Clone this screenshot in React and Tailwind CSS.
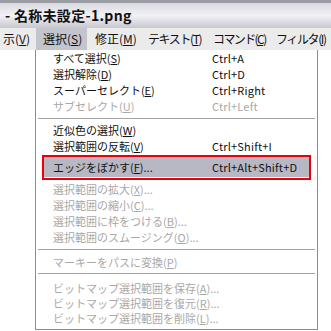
import React from 'react';

const jp = { fontFamily: '"MS UI Gothic", "Noto Sans CJK JP", "Liberation Sans", sans-serif' };

function Mn({ label, k, after = '' }) {
  return (
    <span>
      {label}(<u>{k}</u>){after}
    </span>
  );
}

function Row({ label, k, after, shortcut, disabled, h = 'h-4' }) {
  return (
    <div className={`${h} flex items-center pl-[17px] ${disabled ? 'text-[#a8a8a8]' : 'text-[#111]'}`}>
      <div className="w-[159px] whitespace-nowrap">
        <Mn label={label} k={k} after={after} />
      </div>
      {shortcut && <div className="whitespace-nowrap tracking-[0.2px]">{shortcut}</div>}
    </div>
  );
}

function Sep({ h, top }) {
  return (
    <div className={`${h} flex flex-col`}>
      <div className={top} />
      <div className="mx-[2px] h-px bg-[#a4a4a4]" />
      <div className="mx-[2px] h-px bg-white" />
    </div>
  );
}

export default function App() {
  const menus = [
    { label: '示', k: 'V', box: 'w-[36px] pl-[3px]', text: '' },
    { label: '選択', k: 'S', box: 'w-[51px] pl-[7px] bg-[#c4c4cc]', text: '' },
    { label: '修正', k: 'M', box: 'w-[53px] pl-[8px]', text: '' },
    { label: 'テキスト', k: 'T', box: 'w-[65px] pl-[8px]', text: 'tracking-[-1.4px]' },
    { label: 'コマンド', k: 'C', box: 'w-[64px] pl-[8px]', text: 'tracking-[-1.6px]' },
    { label: 'フィルタ', k: 'I', box: 'w-[62px] pl-[7px]', text: 'tracking-[-1.4px]' },
  ];

  return (
    <div className="relative w-[331px] h-[331px] overflow-hidden bg-white" style={jp}>
      {/* title bar */}
      <div className="h-[28px] border-t-[3px] border-[#9c9ca4] bg-gradient-to-b from-[#d8d8e0] via-[#f2f2f6] to-[#c6c6ce] flex items-center pl-[5px]">
        <span className="text-[14px] font-bold text-[#111] tracking-[0.3px]">- 名称未設定-1.png</span>
      </div>

      {/* menu bar */}
      <div className="h-[22px] bg-[#ebebeb] flex items-stretch text-[12px] text-[#111] overflow-hidden">
        {menus.map((m) => (
          <div key={m.k} className={`${m.box} shrink-0 flex items-center whitespace-nowrap`}>
            <span className={m.text}>
              <Mn label={m.label} k={m.k} />
            </span>
          </div>
        ))}
      </div>

      {/* dropdown */}
      <div className="absolute left-[35px] top-[50px] w-[283px] h-[280px] bg-white border border-[#8c8c8c] border-t-0 text-[11px]">
        <Row label="すべて選択" k="S" shortcut="Ctrl+A" />
        <Row label="選択解除" k="D" shortcut="Ctrl+D" />
        <Row label="スーパーセレクト" k="E" shortcut="Ctrl+Right" />
        <Row label="サブセレクト" k="U" shortcut="Ctrl+Left" disabled />
        <Sep h="h-[8px]" top="h-[4px]" />
        <Row label="近似色の選択" k="W" />
        <Row label="選択範囲の反転" k="V" shortcut="Ctrl+Shift+I" h="h-[17px]" />
        <div className="h-[2px]" />
        <div className="relative h-[20px] mx-[8px] bg-[#b8b8c4] flex items-center pl-[9px] text-[#111]">
          <div className="w-[159px] whitespace-nowrap">
            <Mn label="エッジをぼかす" k="F" after="..." />
          </div>
          <div className="whitespace-nowrap tracking-[0.2px]">Ctrl+Alt+Shift+D</div>
          <div className="absolute -inset-x-[2px] -top-[2px] -bottom-[3px] border-2 border-[#e8000a]" />
        </div>
        <div className="h-[4px]" />
        <Row label="選択範囲の拡大" k="X" after="..." disabled />
        <Row label="選択範囲の縮小" k="C" after="..." disabled />
        <Row label="選択範囲に枠をつける" k="B" after="..." disabled />
        <Row label="選択範囲のスムージング" k="O" after="..." disabled />
        <Sep h="h-[9px]" top="h-[4px]" />
        <Row label="マーキーをパスに変換" k="P" disabled />
        <Sep h="h-[8px]" top="h-[3px]" />
        <div className="h-[3px]" />
        <Row label="ビットマップ選択範囲を保存" k="A" after="..." disabled h="h-[15px]" />
        <Row label="ビットマップ選択範囲を復元" k="R" after="..." disabled h="h-[15px]" />
        <Row label="ビットマップ選択範囲を削除" k="L" after="..." disabled h="h-[15px]" />
      </div>
    </div>
  );
}
